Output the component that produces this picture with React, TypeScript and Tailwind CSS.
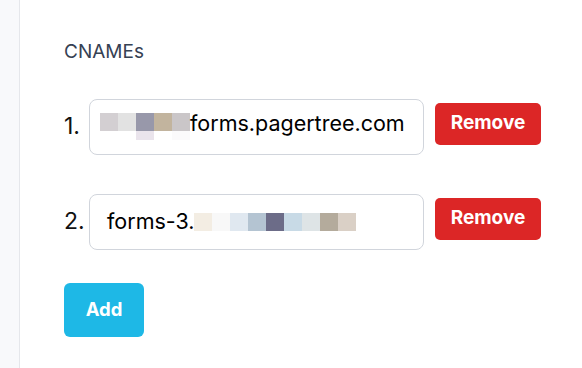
const blocks1 = [
  ['#d3cfd2', '#ffffff'],
  ['#e2e2e2', '#ffffff'],
  ['#9898aa', '#eae4ec'],
  ['#c2b49e', '#ffffff'],
  ['#cac6c8', '#fbfafb'],
];

const blocks2 = ['#f3ede3', '#f8f8f8', '#e0e8f0', '#b4c4d2', '#6c6c88', '#c8dae6', '#dee4e6', '#b4ab9c', '#dad0c6'];

function Row({ n, children }: { n: number; children: React.ReactNode }) {
  return (
    <div className="flex items-start">
      <span className="mt-[10px] w-[25px] text-[23px] text-[#111]">{n}.</span>
      <div className="flex h-[56px] w-[335px] items-center rounded-lg border border-gray-300 bg-white text-[21.5px] text-black">
        {children}
      </div>
      <button className="ml-[11px] mt-[4px] h-[42px] w-[106px] rounded-[5px] bg-[#dc2626] text-[19px] font-bold text-white">
        Remove
      </button>
    </div>
  );
}

export default function App() {
  return (
    <div className="flex h-[368px] w-[582px] bg-white" style={{ fontFamily: 'Inter, "Noto Sans", sans-serif' }}>
      <div className="w-[20px] border-r border-gray-200 bg-[#f8f9fb]" />
      <div className="flex flex-col pl-[44px] pt-[38px]">
        <div className="text-[19px] text-gray-700">CNAMEs</div>
        <div className="mt-[32px] flex flex-col gap-[39px]">
          <Row n={1}>
            <div className="ml-[10px] flex">
              {blocks1.map(([a, b], i) => (
                <div key={i} className="flex flex-col">
                  <span className="h-[18px] w-[18px]" style={{ background: a }} />
                  <span className="h-[9px] w-[18px]" style={{ background: b }} />
                </div>
              ))}
            </div>
            <span className="-mt-[6px]">forms.pagertree.com</span>
          </Row>
          <Row n={2}>
            <span className="ml-[17px]">forms-3.</span>
            <div className="flex">
              {blocks2.map((c, i) => (
                <span key={i} className="h-[18px] w-[18px]" style={{ background: c }} />
              ))}
            </div>
          </Row>
        </div>
        <button className="mt-[33px] h-[54px] w-[80px] rounded-md bg-[#1eb8e6] text-[18.5px] font-bold text-white">
          Add
        </button>
      </div>
    </div>
  );
}
